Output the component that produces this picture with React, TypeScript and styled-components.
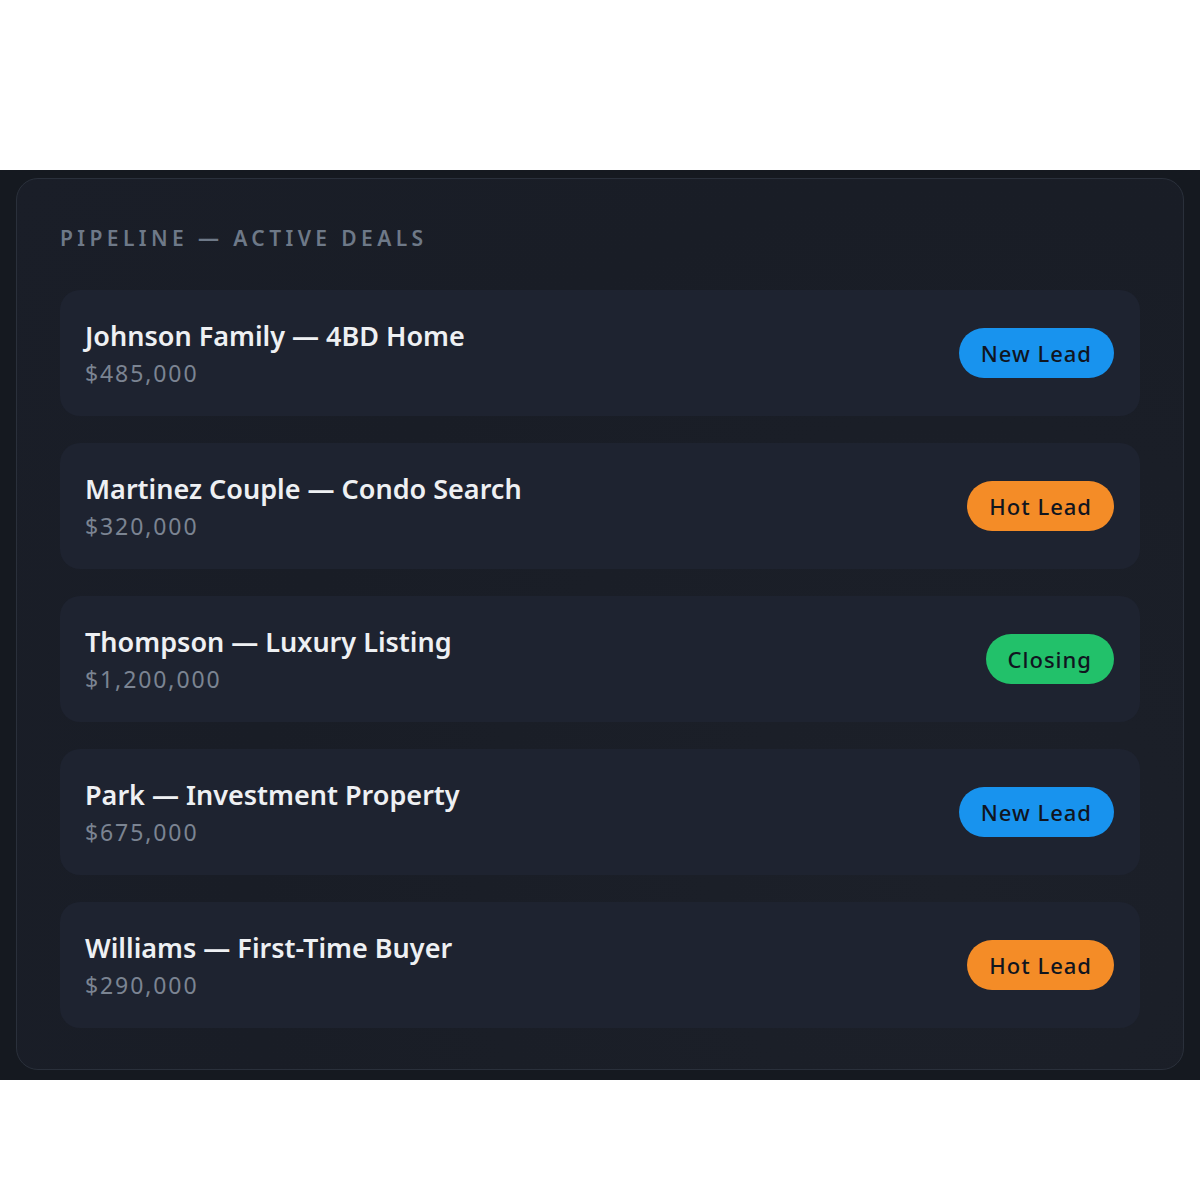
import styled, { createGlobalStyle } from 'styled-components';

const GlobalStyle = createGlobalStyle`
  body {
    margin: 0;
    background: #ffffff;
    font-family: 'Noto Sans', 'Open Sans', sans-serif;
  }
`;

const Band = styled.section`
  margin-top: 170px;
  background: #151920;
  padding: 8px 16px 10px;
`;

const Card = styled.div`
  background: radial-gradient(circle at 80% 80%, #1c2029 0%, #191d26 60%, #1a1e28 100%);
  border: 1px solid #2a303b;
  border-radius: 22px;
  padding: 45px 43px 41px;
`;

const Heading = styled.div`
  font-size: 21px;
  line-height: 28px;
  letter-spacing: 4.4px;
  color: #6e7988;
  font-weight: 600;
  text-transform: uppercase;
  margin-bottom: 38px;
`;

const List = styled.div`
  display: flex;
  flex-direction: column;
  gap: 27px;
`;

const Row = styled.div`
  height: 126px;
  box-sizing: border-box;
  background: #1e2330;
  border-radius: 20px;
  padding: 0 26px 0 25px;
  display: flex;
  align-items: center;
  justify-content: space-between;
`;

const Info = styled.div`
  display: flex;
  flex-direction: column;
  gap: 7px;
`;

const Name = styled.div`
  font-size: 27px;
  line-height: 32px;
  font-weight: 600;
  color: #eef0f3;
`;

const Amount = styled.div`
  font-size: 23px;
  line-height: 28px;
  letter-spacing: 1.9px;
  color: #7b8492;
`;

const badgeColors: Record<string, string> = {
  new: '#1893ee',
  hot: '#f48c27',
  closing: '#22c16a',
};

const Badge = styled.span<{ $kind: string }>`
  height: 50px;
  box-sizing: border-box;
  padding: 0 22px;
  border-radius: 25px;
  display: inline-flex;
  align-items: center;
  font-size: 22px;
  font-weight: 500;
  letter-spacing: 1px;
  color: #10151f;
  background: ${p => badgeColors[p.$kind]};
`;

const deals = [
  { name: 'Johnson Family — 4BD Home', amount: '$485,000', kind: 'new', label: 'New Lead' },
  { name: 'Martinez Couple — Condo Search', amount: '$320,000', kind: 'hot', label: 'Hot Lead' },
  { name: 'Thompson — Luxury Listing', amount: '$1,200,000', kind: 'closing', label: 'Closing' },
  { name: 'Park — Investment Property', amount: '$675,000', kind: 'new', label: 'New Lead' },
  { name: 'Williams — First-Time Buyer', amount: '$290,000', kind: 'hot', label: 'Hot Lead' },
];

export default function App() {
  return (
    <>
      <GlobalStyle />
      <Band>
        <Card>
          <Heading>Pipeline — Active Deals</Heading>
          <List>
            {deals.map(d => (
              <Row key={d.name}>
                <Info>
                  <Name>{d.name}</Name>
                  <Amount>{d.amount}</Amount>
                </Info>
                <Badge $kind={d.kind}>{d.label}</Badge>
              </Row>
            ))}
          </List>
        </Card>
      </Band>
    </>
  );
}
